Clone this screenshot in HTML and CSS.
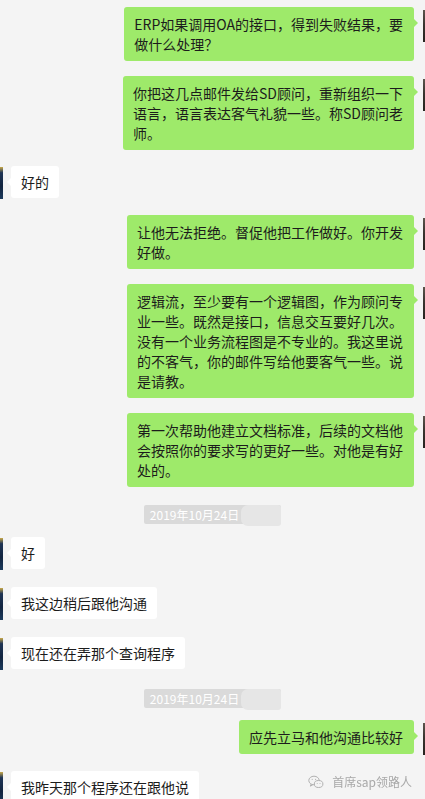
FILE: index.html
```html
<!DOCTYPE html>
<html lang="zh-CN">
<head>
<meta charset="utf-8">
<title>chat</title>
<link rel="stylesheet" href="styles.css">
</head>
<body>
<div class="chat">
  <div class="msg right">
    <div class="bubble">ERP如果调用OA的接口，得到失败结果，要<br>做什么处理？</div>
    <div class="avatar me"></div>
  </div>
  <div class="msg right">
    <div class="bubble">你把这几点邮件发给SD顾问，重新组织一下<br>语言，语言表达客气礼貌一些。称SD顾问老<br>师。</div>
    <div class="avatar me"></div>
  </div>
  <div class="msg left">
    <div class="avatar other"></div>
    <div class="bubble">好的</div>
  </div>
  <div class="msg right">
    <div class="bubble">让他无法拒绝。督促他把工作做好。你开发<br>好做。</div>
    <div class="avatar me"></div>
  </div>
  <div class="msg right">
    <div class="bubble">逻辑流，至少要有一个逻辑图，作为顾问专<br>业一些。既然是接口，信息交互要好几次。<br>没有一个业务流程图是不专业的。我这里说<br>的不客气，你的邮件写给他要客气一些。说<br>是请教。</div>
    <div class="avatar me"></div>
  </div>
  <div class="msg right">
    <div class="bubble">第一次帮助他建立文档标准，后续的文档他<br>会按照你的要求写的更好一些。对他是有好<br>处的。</div>
    <div class="avatar me"></div>
  </div>
  <div class="date"><span class="date-text">2019年10月24日</span><span class="date-blur"></span></div>
  <div class="msg left">
    <div class="avatar other"></div>
    <div class="bubble">好</div>
  </div>
  <div class="msg left">
    <div class="avatar other"></div>
    <div class="bubble">我这边稍后跟他沟通</div>
  </div>
  <div class="msg left">
    <div class="avatar other"></div>
    <div class="bubble">现在还在弄那个查询程序</div>
  </div>
  <div class="date"><span class="date-text">2019年10月24日</span><span class="date-blur"></span></div>
  <div class="msg right">
    <div class="bubble">应先立马和他沟通比较好</div>
    <div class="avatar me"></div>
  </div>
  <div class="msg left">
    <div class="avatar other"></div>
    <div class="bubble">我昨天那个程序还在跟他说</div>
  </div>
  <div class="watermark">
    <svg class="wm-icon" width="16" height="14" viewBox="0 0 16 14" fill="none" stroke="#b0b0b0" stroke-width="1">
      <ellipse cx="6" cy="5.5" rx="5.2" ry="4.3"/>
      <path d="M3 9.2 L2.4 11.2 L4.8 9.8"/>
      <ellipse cx="10.6" cy="9" rx="4.3" ry="3.5" fill="#f4f4f4"/>
      <circle cx="4.2" cy="4.3" r="0.6" fill="#b0b0b0" stroke="none"/>
      <circle cx="7.6" cy="4.3" r="0.6" fill="#b0b0b0" stroke="none"/>
      <circle cx="9.2" cy="8.4" r="0.5" fill="#b0b0b0" stroke="none"/>
      <circle cx="12" cy="8.4" r="0.5" fill="#b0b0b0" stroke="none"/>
    </svg>
    <span class="wm-text">首席sap领路人</span>
  </div>
</div>
</body>
</html>
```

FILE: styles.css
```css
html, body {
  margin: 0;
  padding: 0;
  background: #f4f4f4;
  overflow: hidden;
}

.chat {
  position: relative;
  width: 425px;
  height: 799px;
  overflow: hidden;
  display: flex;
  flex-direction: column;
  gap: 15px;
  padding-top: 7px;
  box-sizing: border-box;
  font-family: "Noto Sans CJK SC", "Microsoft YaHei", sans-serif;
  font-size: 14px;
  line-height: 20px;
  color: #1c1c1c;
}

.msg {
  display: flex;
  align-items: flex-start;
}

.msg.right {
  justify-content: flex-end;
  margin-right: -38px;
}

.msg.left {
  margin: 1px 0;
}

.bubble {
  position: relative;
  white-space: nowrap;
  border-radius: 3px;
}

.msg.right .bubble {
  background: #9eea6a;
  padding: 7px 11px 7px 10px;
}

.msg.right .bubble::after {
  content: "";
  position: absolute;
  top: 12px;
  right: -4px;
  border-left: 4px solid #9eea6a;
  border-top: 4px solid transparent;
  border-bottom: 4px solid transparent;
}

.msg.left .bubble {
  background: #ffffff;
  padding: 6px 10px;
}

.msg.left .bubble::before {
  content: "";
  position: absolute;
  top: 12px;
  left: -4px;
  border-right: 4px solid #ffffff;
  border-top: 4px solid transparent;
  border-bottom: 4px solid transparent;
}

.avatar {
  flex: none;
  width: 40px;
  height: 32px;
}

.avatar.me {
  margin-left: 9px;
  margin-top: 3px;
  background: linear-gradient(180deg, #5d564e 0%, #3a3530 45%, #27231f 100%);
}

.avatar.other {
  margin-left: -37px;
  margin-right: 8px;
  margin-top: 1px;
  background: linear-gradient(180deg, #c9a94a 0%, #1e3455 18%, #12243f 60%, #1b3a5c 100%);
}

.date {
  align-self: center;
  display: flex;
  align-items: flex-start;
  margin: 3px 0 -3px;
  height: 19px;
  background: #dadada;
  border-radius: 2px;
  padding-left: 6px;
}

.date-text {
  font-size: 12px;
  line-height: 19px;
  color: #ffffff;
}

.date-blur {
  width: 40px;
  height: 21px;
  margin-left: 2px;
  background: #e6e6e6;
  border-radius: 7px 3px 3px 7px;
}

.watermark {
  position: absolute;
  right: 13px;
  bottom: 9px;
  display: flex;
  align-items: center;
  gap: 8px;
  color: #a8a8a8;
  font-size: 12px;
  line-height: 16px;
  filter: blur(0.3px);
}

.wm-icon {
  display: block;
}
```
